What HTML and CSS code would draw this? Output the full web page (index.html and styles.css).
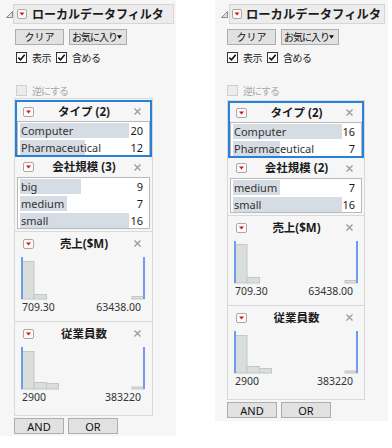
FILE: index.html
```html
<!DOCTYPE html>
<html lang="ja">
<head>
<meta charset="utf-8">
<link rel="stylesheet" href="styles.css">
</head>
<body>
<div class="panel l">
  <div class="title-row">
    <svg class="disc" width="7" height="7" viewBox="0 0 7 7"><path d="M6.5 0.5V6.5H0.5Z" fill="#e2e2e2" stroke="#8a8a8a"/></svg>
    <div class="title-box">
      <svg class="tbtn" width="10" height="10" viewBox="0 0 10 10"><rect x="0.5" y="0.5" width="9" height="9" rx="1.5" fill="#fbfbfb" stroke="#a8a8a8"/><path d="M2.5 3.5h5L5 6.5z" fill="#d8141c"/></svg>
      <span class="title">ローカルデータフィルタ</span>
    </div>
  </div>
  <div class="btn-row top">
    <span class="btn clear">クリア</span>
    <span class="btn fav"><span>お気に入り</span><svg width="6" height="4" viewBox="0 0 6 4"><path d="M0 0h6L3 4z" fill="#111"/></svg></span>
  </div>
  <div class="check-row">
    <svg class="cb" width="11" height="11" viewBox="0 0 11 11"><rect x="0.5" y="0.5" width="10" height="10" fill="#fff" stroke="#333"/><path d="M2.3 5.6l2.2 2.2 4.2-5" fill="none" stroke="#111" stroke-width="1.6"/></svg>
    <span class="cl">表示</span>
    <svg class="cb" width="11" height="11" viewBox="0 0 11 11"><rect x="0.5" y="0.5" width="10" height="10" fill="#fff" stroke="#333"/><path d="M2.3 5.6l2.2 2.2 4.2-5" fill="none" stroke="#111" stroke-width="1.6"/></svg>
    <span class="cl">含める</span>
  </div>
  <div class="check-row inv">
    <svg class="cb" width="11" height="11" viewBox="0 0 11 11"><rect x="0.5" y="0.5" width="10" height="10" fill="#ececec" stroke="#cfcfcf"/></svg>
    <span class="cl dis">逆にする</span>
  </div>
  <div class="filters">
    <div class="sec sel">
      <div class="sec-head">
        <svg class="rbtn" width="11" height="10" viewBox="0 0 11 10"><rect x="0.5" y="0.5" width="10" height="9" rx="1.5" fill="#fbfbfb" stroke="#a8a8a8"/><path d="M3 3.5h5L5.5 6.5z" fill="#d8141c"/></svg>
        <span class="sec-title">タイプ (2)</span>
        <svg class="x" width="7" height="7" viewBox="0 0 7 7"><path d="M0.5 0.5l6 6M6.5 0.5l-6 6" stroke="#9a9a9a" stroke-width="1.3"/></svg>
      </div>
      <div class="list">
        <div class="row"><span class="lbl" style="--w:109px">Computer</span><span class="cnt">20</span></div>
        <div class="row"><span class="lbl" style="--w:65px">Pharmaceutical</span><span class="cnt">12</span></div>
      </div>
    </div>
    <div class="sec">
      <div class="sec-head">
        <svg class="rbtn" width="11" height="10" viewBox="0 0 11 10"><rect x="0.5" y="0.5" width="10" height="9" rx="1.5" fill="#fbfbfb" stroke="#a8a8a8"/><path d="M3 3.5h5L5.5 6.5z" fill="#d8141c"/></svg>
        <span class="sec-title">会社規模 (3)</span>
        <svg class="x" width="7" height="7" viewBox="0 0 7 7"><path d="M0.5 0.5l6 6M6.5 0.5l-6 6" stroke="#9a9a9a" stroke-width="1.3"/></svg>
      </div>
      <div class="list">
        <div class="row"><span class="lbl" style="--w:61px">big</span><span class="cnt">9</span></div>
        <div class="row"><span class="lbl" style="--w:47px">medium</span><span class="cnt">7</span></div>
        <div class="row"><span class="lbl" style="--w:109px">small</span><span class="cnt">16</span></div>
      </div>
    </div>
    <div class="sec hist">
      <div class="sec-head">
        <svg class="rbtn" width="11" height="10" viewBox="0 0 11 10"><rect x="0.5" y="0.5" width="10" height="9" rx="1.5" fill="#fbfbfb" stroke="#a8a8a8"/><path d="M3 3.5h5L5.5 6.5z" fill="#d8141c"/></svg>
        <span class="sec-title">売上($M)</span>
        <svg class="x" width="7" height="7" viewBox="0 0 7 7"><path d="M0.5 0.5l6 6M6.5 0.5l-6 6" stroke="#9a9a9a" stroke-width="1.3"/></svg>
      </div>
      <svg class="chart" width="127" height="43" viewBox="0 0 127 43">
        <rect x="1.5" y="4.5" width="12.5" height="37.5" fill="#dadedb" stroke="#c3c8c4"/>
        <rect x="14" y="37.5" width="12.5" height="4.5" fill="#dadedb" stroke="#c3c8c4"/>
        <rect x="112" y="39.5" width="12" height="2.5" fill="#dadedb" stroke="#c3c8c4"/>
        <rect x="1" y="0" width="2" height="42" fill="#6e9df0"/>
        <rect x="123" y="0" width="2" height="42" fill="#6e9df0"/>
      </svg>
      <div class="hlabels"><span>709.30</span><span>63438.00</span></div>
    </div>
    <div class="sec hist last">
      <div class="sec-head">
        <svg class="rbtn" width="11" height="10" viewBox="0 0 11 10"><rect x="0.5" y="0.5" width="10" height="9" rx="1.5" fill="#fbfbfb" stroke="#a8a8a8"/><path d="M3 3.5h5L5.5 6.5z" fill="#d8141c"/></svg>
        <span class="sec-title">従業員数</span>
        <svg class="x" width="7" height="7" viewBox="0 0 7 7"><path d="M0.5 0.5l6 6M6.5 0.5l-6 6" stroke="#9a9a9a" stroke-width="1.3"/></svg>
      </div>
      <svg class="chart" width="127" height="43" viewBox="0 0 127 43">
        <rect x="1.5" y="4.5" width="12.5" height="37.5" fill="#dadedb" stroke="#c3c8c4"/>
        <rect x="14" y="35.5" width="12.5" height="6.5" fill="#dadedb" stroke="#c3c8c4"/>
        <rect x="26.5" y="36.5" width="12" height="5.5" fill="#dadedb" stroke="#c3c8c4"/>
        <rect x="112" y="40" width="12" height="2" fill="#dadedb" stroke="#c3c8c4"/>
        <rect x="1" y="0" width="2" height="42" fill="#6e9df0"/>
        <rect x="123" y="0" width="2" height="42" fill="#6e9df0"/>
      </svg>
      <div class="hlabels"><span>2900</span><span>383220</span></div>
    </div>
  </div>
  <div class="btn-row bottom">
    <span class="btn op">AND</span>
    <span class="btn op">OR</span>
  </div>
</div>

<div class="panel r">
  <div class="title-row">
    <svg class="disc" width="7" height="7" viewBox="0 0 7 7"><path d="M6.5 0.5V6.5H0.5Z" fill="#e2e2e2" stroke="#8a8a8a"/></svg>
    <div class="title-box">
      <svg class="tbtn" width="10" height="10" viewBox="0 0 10 10"><rect x="0.5" y="0.5" width="9" height="9" rx="1.5" fill="#fbfbfb" stroke="#a8a8a8"/><path d="M2.5 3.5h5L5 6.5z" fill="#d8141c"/></svg>
      <span class="title">ローカルデータフィルタ</span>
    </div>
  </div>
  <div class="btn-row top">
    <span class="btn clear">クリア</span>
    <span class="btn fav"><span>お気に入り</span><svg width="6" height="4" viewBox="0 0 6 4"><path d="M0 0h6L3 4z" fill="#111"/></svg></span>
  </div>
  <div class="check-row">
    <svg class="cb" width="11" height="11" viewBox="0 0 11 11"><rect x="0.5" y="0.5" width="10" height="10" fill="#fff" stroke="#333"/><path d="M2.3 5.6l2.2 2.2 4.2-5" fill="none" stroke="#111" stroke-width="1.6"/></svg>
    <span class="cl">表示</span>
    <svg class="cb" width="11" height="11" viewBox="0 0 11 11"><rect x="0.5" y="0.5" width="10" height="10" fill="#fff" stroke="#333"/><path d="M2.3 5.6l2.2 2.2 4.2-5" fill="none" stroke="#111" stroke-width="1.6"/></svg>
    <span class="cl">含める</span>
  </div>
  <div class="check-row inv">
    <svg class="cb" width="11" height="11" viewBox="0 0 11 11"><rect x="0.5" y="0.5" width="10" height="10" fill="#ececec" stroke="#cfcfcf"/></svg>
    <span class="cl dis">逆にする</span>
  </div>
  <div class="filters">
    <div class="sec sel">
      <div class="sec-head">
        <svg class="rbtn" width="11" height="10" viewBox="0 0 11 10"><rect x="0.5" y="0.5" width="10" height="9" rx="1.5" fill="#fbfbfb" stroke="#a8a8a8"/><path d="M3 3.5h5L5.5 6.5z" fill="#d8141c"/></svg>
        <span class="sec-title">タイプ (2)</span>
        <svg class="x" width="7" height="7" viewBox="0 0 7 7"><path d="M0.5 0.5l6 6M6.5 0.5l-6 6" stroke="#9a9a9a" stroke-width="1.3"/></svg>
      </div>
      <div class="list">
        <div class="row"><span class="lbl" style="--w:110px">Computer</span><span class="cnt">16</span></div>
        <div class="row"><span class="lbl" style="--w:47px">Pharmaceutical</span><span class="cnt">7</span></div>
      </div>
    </div>
    <div class="sec">
      <div class="sec-head">
        <svg class="rbtn" width="11" height="10" viewBox="0 0 11 10"><rect x="0.5" y="0.5" width="10" height="9" rx="1.5" fill="#fbfbfb" stroke="#a8a8a8"/><path d="M3 3.5h5L5.5 6.5z" fill="#d8141c"/></svg>
        <span class="sec-title">会社規模 (2)</span>
        <svg class="x" width="7" height="7" viewBox="0 0 7 7"><path d="M0.5 0.5l6 6M6.5 0.5l-6 6" stroke="#9a9a9a" stroke-width="1.3"/></svg>
      </div>
      <div class="list">
        <div class="row"><span class="lbl" style="--w:47px">medium</span><span class="cnt">7</span></div>
        <div class="row"><span class="lbl" style="--w:110px">small</span><span class="cnt">16</span></div>
      </div>
    </div>
    <div class="sec hist">
      <div class="sec-head">
        <svg class="rbtn" width="11" height="10" viewBox="0 0 11 10"><rect x="0.5" y="0.5" width="10" height="9" rx="1.5" fill="#fbfbfb" stroke="#a8a8a8"/><path d="M3 3.5h5L5.5 6.5z" fill="#d8141c"/></svg>
        <span class="sec-title">売上($M)</span>
        <svg class="x" width="7" height="7" viewBox="0 0 7 7"><path d="M0.5 0.5l6 6M6.5 0.5l-6 6" stroke="#9a9a9a" stroke-width="1.3"/></svg>
      </div>
      <svg class="chart" width="127" height="43" viewBox="0 0 127 43">
        <rect x="1.5" y="3.5" width="12.5" height="38.5" fill="#dadedb" stroke="#c3c8c4"/>
        <rect x="14" y="36.5" width="12.5" height="5.5" fill="#dadedb" stroke="#c3c8c4"/>
        <rect x="112" y="39.5" width="12" height="2.5" fill="#dadedb" stroke="#c3c8c4"/>
        <rect x="1" y="0" width="2" height="42" fill="#6e9df0"/>
        <rect x="123" y="0" width="2" height="42" fill="#6e9df0"/>
      </svg>
      <div class="hlabels"><span>709.30</span><span>63438.00</span></div>
    </div>
    <div class="sec hist last">
      <div class="sec-head">
        <svg class="rbtn" width="11" height="10" viewBox="0 0 11 10"><rect x="0.5" y="0.5" width="10" height="9" rx="1.5" fill="#fbfbfb" stroke="#a8a8a8"/><path d="M3 3.5h5L5.5 6.5z" fill="#d8141c"/></svg>
        <span class="sec-title">従業員数</span>
        <svg class="x" width="7" height="7" viewBox="0 0 7 7"><path d="M0.5 0.5l6 6M6.5 0.5l-6 6" stroke="#9a9a9a" stroke-width="1.3"/></svg>
      </div>
      <svg class="chart" width="127" height="43" viewBox="0 0 127 43">
        <rect x="1.5" y="4.5" width="12.5" height="37.5" fill="#dadedb" stroke="#c3c8c4"/>
        <rect x="14" y="35.5" width="12.5" height="6.5" fill="#dadedb" stroke="#c3c8c4"/>
        <rect x="26.5" y="37.5" width="12" height="4.5" fill="#dadedb" stroke="#c3c8c4"/>
        <rect x="112" y="40" width="12" height="2" fill="#dadedb" stroke="#c3c8c4"/>
        <rect x="1" y="0" width="2" height="42" fill="#6e9df0"/>
        <rect x="123" y="0" width="2" height="42" fill="#6e9df0"/>
      </svg>
      <div class="hlabels"><span>2900</span><span>383220</span></div>
    </div>
  </div>
  <div class="btn-row bottom">
    <span class="btn op">AND</span>
    <span class="btn op">OR</span>
  </div>
</div>
</body>
</html>
```

FILE: styles.css
```css
* { box-sizing: border-box; margin: 0; padding: 0; }

body {
  margin: 0;
  background: #ffffff;
  display: flex;
  align-items: flex-start;
  font-family: "Noto Sans", "Noto Sans CJK JP", sans-serif;
  font-size: 11px;
  line-height: 1;
  color: #1b1b1b;
}

.panel {
  background: #f6f6f6;
  width: 176px;
  padding-bottom: 2px;
}
.panel.r {
  margin-left: 39px;
  width: 173px;
  padding-bottom: 3px;
}

/* title */
.title-row {
  display: flex;
  align-items: center;
  margin-top: 4px;
  padding-right: 2px;
}
.r .title-row { padding-right: 3px; }
.disc { flex: none; margin-left: 6px; }
.r .disc { margin-right: 1px; }
.title-box {
  flex: 1;
  min-width: 0;
  height: 20px;
  border: 1px solid #d6d6d6;
  background: #ececec;
  display: flex;
  align-items: center;
  padding-left: 3px;
  overflow: hidden;
}
.r .title-box { padding-left: 2px; }
.tbtn { flex: none; }
.title {
  margin-left: 5px;
  font-family: "Noto Sans CJK JP", sans-serif;
  font-weight: bold;
  font-size: 12px;
  white-space: nowrap;
}
.r .title { font-size: 12.3px; margin-left: 4px; }

/* buttons */
.btn-row {
  display: flex;
  gap: 5px;
  margin-left: 15px;
}
.r .btn-row { margin-left: 12px; }
.btn-row.top { margin-top: 5px; }
.btn-row.bottom { margin-top: 2px; gap: 4px; margin-left: 14px; }
.r .btn-row.bottom { margin-left: 12px; }

.btn {
  height: 16px;
  border: 1px solid #adadad;
  background: #e1e1e1;
  display: flex;
  align-items: center;
  justify-content: center;
  font-family: "Noto Sans CJK JP", sans-serif;
  font-size: 10px;
  color: #111;
  white-space: nowrap;
}
.btn.clear { width: 49px; }
.btn.fav {
  width: 58px;
  justify-content: space-between;
  padding: 0 4px 0 2px;
  letter-spacing: -1px;
}
.btn.op {
  width: 50px;
  font-family: "Noto Sans", sans-serif;
  font-size: 11px;
}

/* checkboxes */
.check-row {
  display: flex;
  align-items: center;
  height: 11px;
  margin-top: 7px;
  margin-left: 16px;
}
.r .check-row { margin-left: 12px; }
.check-row.inv { margin-top: 22px; }
.cb { flex: none; }
.cl {
  margin: 0 5px 0 5px;
  font-family: "Noto Sans CJK JP", sans-serif;
  font-size: 10px;
  letter-spacing: -0.5px;
}
.cl.dis { color: #a5a5a5; letter-spacing: -1px; }

/* filter column */
.filters {
  margin: 2px 0 0 14px;
  width: 139px;
  border: 1px solid #d9d9d9;
  padding-top: 1px;
}
.r .filters {
  margin-left: 12px;
  margin-top: 4px;
  width: 138px;
  padding-top: 0;
}

.sec {
  padding: 0 2px 2px;
  border-bottom: 1px solid #d9d9d9;
}
.sec.sel {
  border: 2px solid #2781da;
  padding: 0;
}
.sec.last { border-bottom: 0; }

.sec-head {
  height: 20px;
  display: flex;
  align-items: center;
  padding: 0 9px 0 6px;
}
.sel .sec-head { height: 19px; }
.rbtn, .x { flex: none; }
.sec-title {
  flex: 1;
  text-align: center;
  font-weight: bold;
  font-size: 11.5px;
  white-space: nowrap;
}

.list {
  background: #ffffff;
  border: 1px solid #b9b9b9;
  padding: 1px 6px 0 2px;
}
.sel .list { border-bottom: 0; }
.row {
  display: flex;
  height: 15px;
  align-items: center;
  margin-bottom: 2px;
}
.row:last-child { margin-bottom: 0; }
.lbl {
  width: 109px;
  height: 15px;
  line-height: 15px;
  padding-left: 1px;
  white-space: nowrap;
  background: linear-gradient(#d6dce3, #d6dce3) no-repeat;
  background-size: var(--w) 100%;
  color: #333;
}
.r .lbl { width: 110px; }
.cnt {
  flex: 1;
  text-align: right;
  line-height: 15px;
}

/* histograms */
.sec.hist { padding-bottom: 8px; }
.sec.hist.last { padding-bottom: 12px; }
.hist .sec-head { height: 21px; padding-top: 2px; }
.chart {
  display: block;
  margin: 4px 0 0 3px;
}
.hlabels {
  display: flex;
  justify-content: space-between;
  margin-top: 1px;
  padding: 0 9px 0 5px;
  font-size: 10.5px;
  line-height: 12px;
  color: #333;
}
```
